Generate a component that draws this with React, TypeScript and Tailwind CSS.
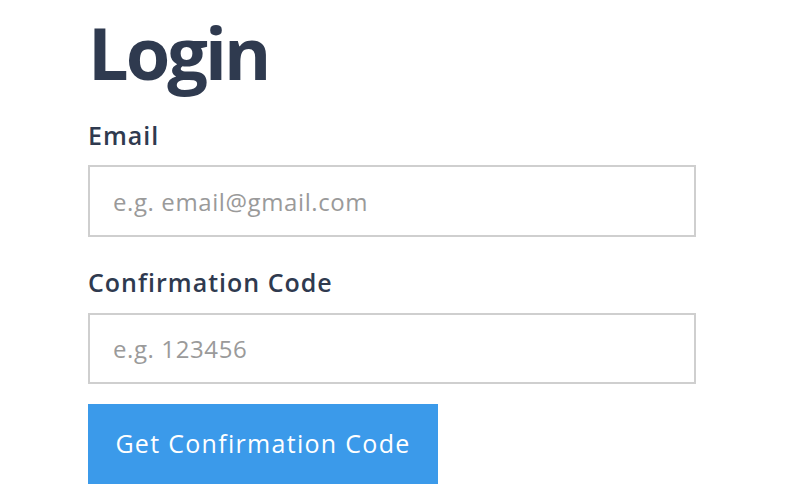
import { useState } from 'react';

function LoginForm() {
  const [email, setEmail] = useState('');
  const [code, setCode] = useState('');

  return (
    <div className="flex flex-col pl-[88px] pt-[8px]">
      <h1 className="text-[72px] leading-[88px] font-bold text-[#2f3a4f] tracking-[-3px]">
        Login
      </h1>
      <form className="flex flex-col" onSubmit={(e) => e.preventDefault()}>
        <label
          htmlFor="email"
          className="mt-[24px] text-[25px] leading-[30px] font-semibold text-[#2f3a4f] tracking-[1px]"
        >
          Email
        </label>
        <input
          id="email"
          value={email}
          onChange={(e) => setEmail(e.target.value)}
          placeholder="e.g. email@gmail.com"
          className="mt-[15px] w-[608px] h-[72px] border-2 border-[#cfcfcf] px-[23px] text-[24px] tracking-[0.6px] text-[#333] placeholder:text-[#9a9a9a] outline-none"
        />
        <label
          htmlFor="code"
          className="mt-[30px] text-[25px] leading-[30px] font-semibold text-[#2f3a4f] tracking-[1px]"
        >
          Confirmation Code
        </label>
        <input
          id="code"
          value={code}
          onChange={(e) => setCode(e.target.value)}
          placeholder="e.g. 123456"
          className="mt-[16px] w-[608px] h-[71px] border-2 border-[#cfcfcf] px-[23px] text-[24px] tracking-[0.6px] text-[#333] placeholder:text-[#9a9a9a] outline-none"
        />
        <button
          type="submit"
          className="mt-[20px] w-[350px] h-[80px] bg-[#3b9aea] text-white text-[25px] tracking-[1.3px]"
        >
          Get Confirmation Code
        </button>
      </form>
    </div>
  );
}

export default function App() {
  return (
    <div className="w-[800px] h-[500px] bg-white overflow-hidden font-['Open_Sans',sans-serif]">
      <LoginForm />
    </div>
  );
}
